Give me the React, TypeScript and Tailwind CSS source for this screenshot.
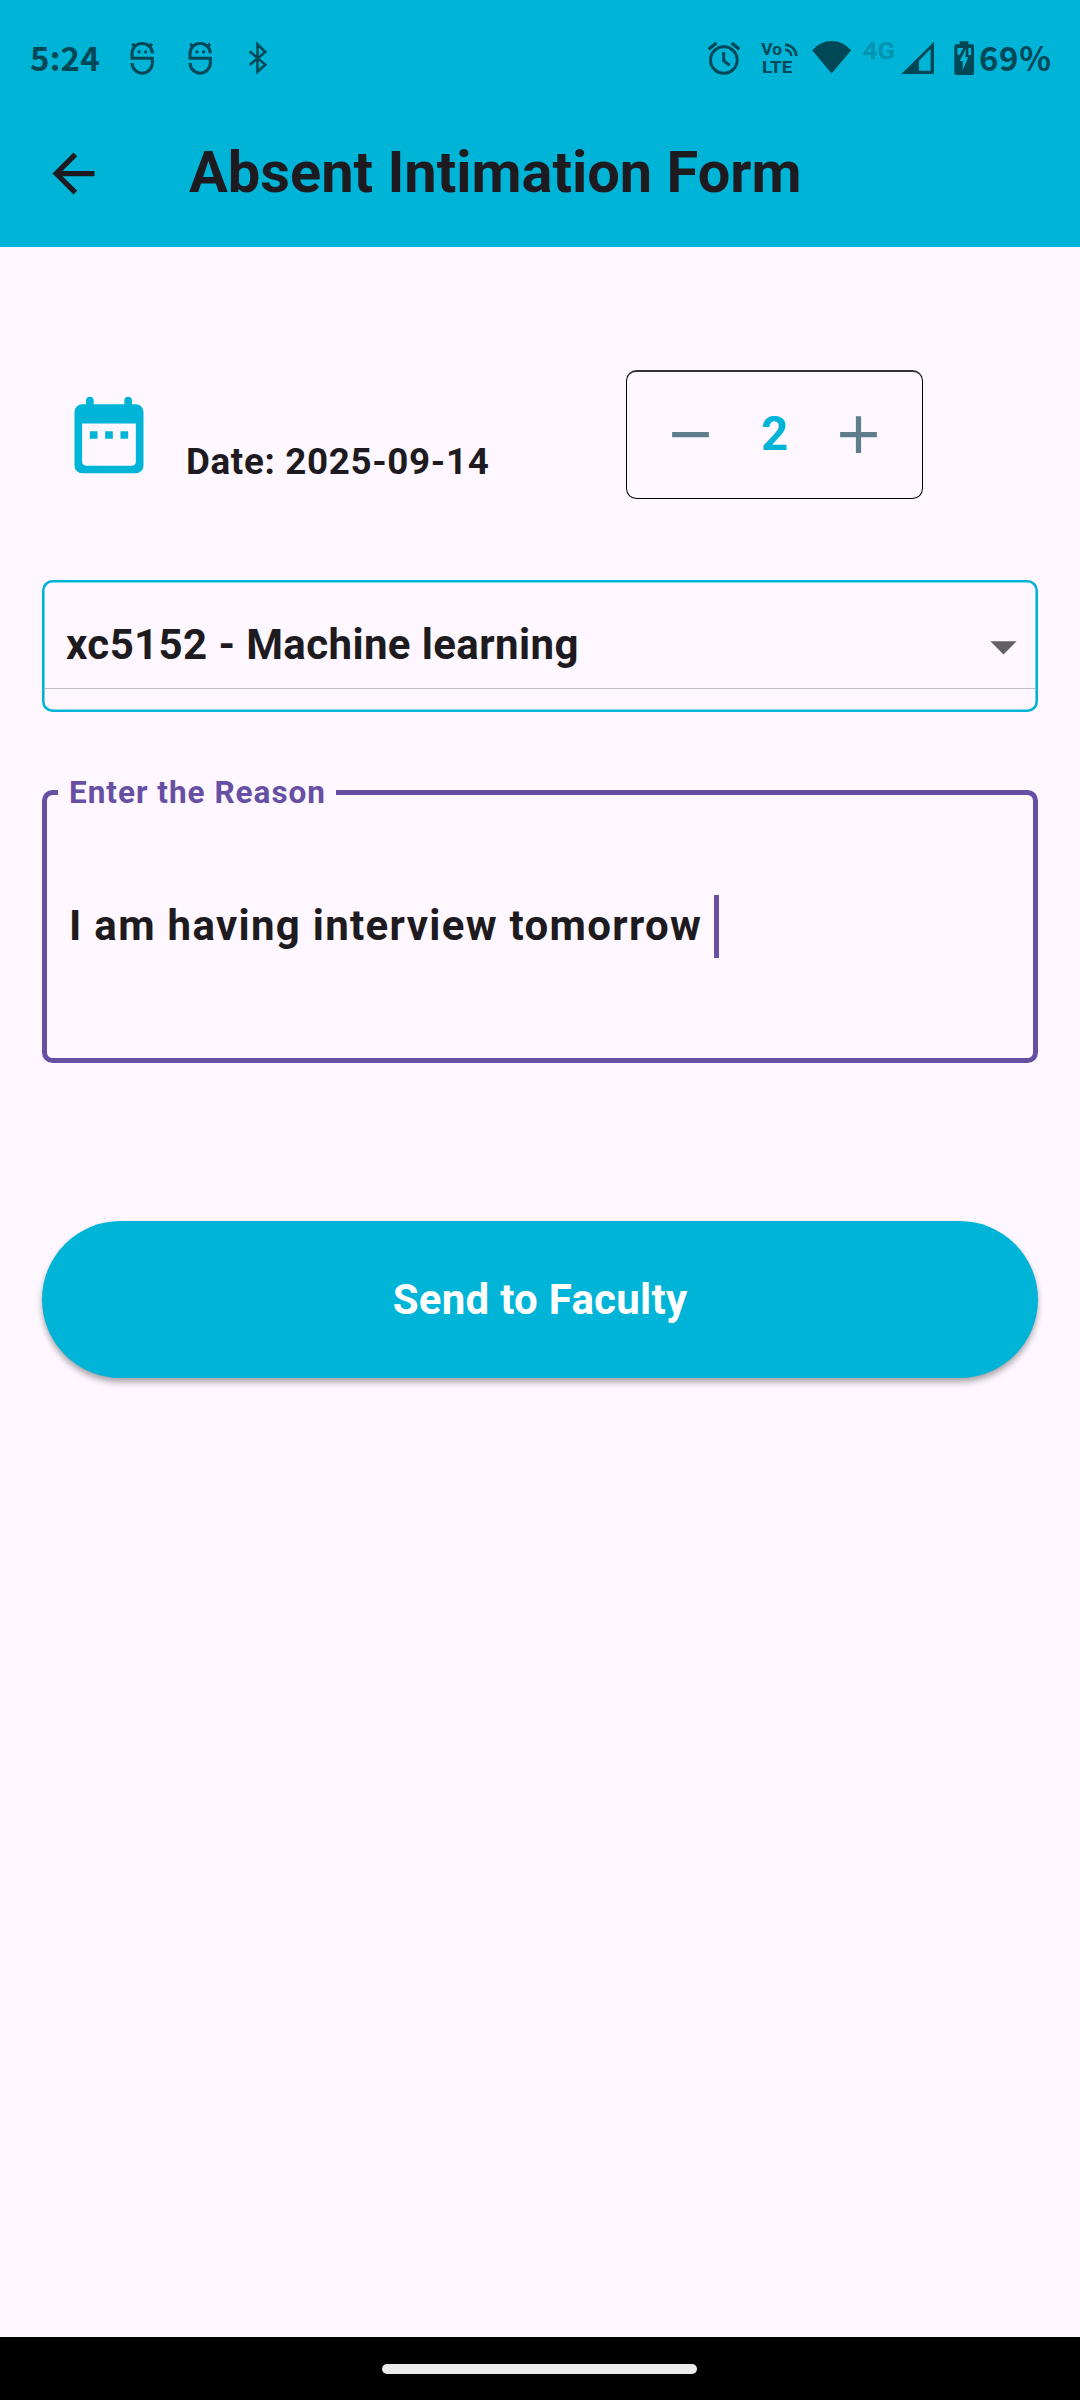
const INK = "#004856";

function MascotIcon({ className }: { className: string }) {
  return (
    <svg viewBox="0 0 80 100" className={className} fill="none" stroke={INK} strokeWidth="9">
      <path d="M70 37A30.500 29.500 0 0 0 9 37V52H70V66A30.500 30.500 0 0 1 9 66" />
      <path d="M10 8L18 17M69 8L61 17" strokeWidth="9" />
      <circle cx="30" cy="32.500" r="5" fill={INK} stroke="none" />
      <circle cx="50" cy="32.500" r="5" fill={INK} stroke="none" />
    </svg>
  );
}

function BluetoothIcon() {
  return (
    <svg viewBox="740 62 66 102" className="ml-[33.500px] h-[34px] w-[22px]" fill="none" stroke={INK} strokeWidth="7.500">
      <path d="M748 93L795 133L771.500 154V72L795 95L748 134" />
    </svg>
  );
}

function AlarmIcon() {
  return (
    <svg viewBox="46 60 108 108" className="h-[36px] w-[36px]" fill="none" stroke={INK} strokeWidth="9">
      <circle cx="99.500" cy="120" r="40" />
      <path d="M99 96V122L117 136" strokeWidth="9" />
      <path d="M54 88L77 69M146 88L123 69" strokeWidth="10" />
    </svg>
  );
}

function VolteIcon() {
  return (
    <svg viewBox="208 60 120 108" className="ml-[18px] h-[36px] w-[40px]" fontFamily="Roboto, sans-serif" fontWeight="700" fill={INK}>
      <text x="212" y="103.500" fontSize="49" textLength="62" lengthAdjust="spacingAndGlyphs">Vo</text>
      <text x="214" y="159" fontSize="52" textLength="91" lengthAdjust="spacingAndGlyphs">LTE</text>
      <path d="M283 74A35 34 0 0 1 317 108M283 89A19 19 0 0 1 302 108" fill="none" stroke={INK} strokeWidth="7.500" />
    </svg>
  );
}

function WifiIcon() {
  return (
    <svg viewBox="362 60 124 108" className="ml-[11px] h-[36px] w-[41.300px]" fill={INK}>
      <path d="M424 160.500L365.500 91A75 75 0 0 1 482.500 91Z" />
    </svg>
  );
}

function NetworkLabel() {
  return (
    <svg viewBox="514 60 104 108" className="ml-[9.400px] h-[36px] w-[34.700px] overflow-visible" fontFamily="Roboto, sans-serif" fontWeight="700" fill="#0094b2">
      <text x="516" y="116.500" fontSize="69" textLength="97" lengthAdjust="spacingAndGlyphs">4G</text>
    </svg>
  );
}

function SignalIcon() {
  return (
    <svg viewBox="630 60 106 108" className="ml-[4px] h-[36px] w-[35.300px]" fill={INK} fillRule="evenodd">
      <path d="M634 162L732 65V162ZM687 152H722V87L687 122Z" />
    </svg>
  );
}

function BatteryIcon() {
  return (
    <svg viewBox="789 60 68 108" className="ml-[17.700px] h-[36px] w-[22.700px]">
      <path d="M809 64H835V73H847Q852 73 852 78V160Q852 165 847 165H798Q793 165 793 160V78Q793 73 798 73H809Z" fill={INK} />
      <path d="M802 84H820L809 104H802ZM835 84H843V105H835Z" fill="#00b4d8" />
      <path d="M828 86L809 123H818V151L835 112H826Z" fill="#00b4d8" />
    </svg>
  );
}

function StatusBar() {
  return (
    <div className="flex h-[100px] items-center pt-[16px] pl-[30px] font-['Noto_Sans_CJK_JP',sans-serif] text-[33px] leading-[48px] font-bold text-[#004856]">
      <span className="w-[98.500px] pb-[2px] tracking-[0.200px]">5:24</span>
      <MascotIcon className="h-[33.300px] w-[26.700px]" />
      <MascotIcon className="ml-[31.500px] h-[33.300px] w-[26.700px]" />
      <BluetoothIcon />
      <div className="ml-auto flex items-center">
        <AlarmIcon />
        <VolteIcon />
        <WifiIcon />
        <NetworkLabel />
        <SignalIcon />
        <BatteryIcon />
        <span className="ml-[3px] w-[101px] pb-[2px] tracking-[0.600px]">69%</span>
      </div>
    </div>
  );
}

function AppBar() {
  return (
    <div className="flex h-[147px] items-center pl-[42px]">
      <button aria-label="Back">
        <svg viewBox="0 0 24 24" className="h-[63px] w-[63px]" fill="#1d1b20">
          <path d="M20 11H7.830l5.590-5.590L12 4l-8 8 8 8 1.410-1.410L7.830 13H20v-2z" />
        </svg>
      </button>
      <h1 className="ml-[84px] pb-[4px] text-[57.750px] leading-[74px] font-bold">Absent Intimation Form</h1>
    </div>
  );
}

function DateRow() {
  return (
    <div className="flex h-[129px] items-start pl-[21px]">
      <svg viewBox="0 0 24 24" className="mt-[19px] h-[92px] w-[92px]" fill="#00b4d8" fillRule="evenodd">
        <path d="M7 2a1 1 0 0 1 1 1v1h8V3a1 1 0 0 1 2 0v1h1a2 2 0 0 1 2 2v14a2 2 0 0 1-2 2H5a2 2 0 0 1-2-2V6a2 2 0 0 1 2-2h1V3a1 1 0 0 1 1-1zM5 9v10a1 1 0 0 0 1 1h12a1 1 0 0 0 1-1V9z" />
        <path d="M7 11h2v2H7zM11 11h2v2h-2zM15 11h2v2h-2z" />
      </svg>
      <p className="mt-[70px] ml-[31px] w-[440px] text-[36.750px] leading-[44px] font-bold tracking-[0.656px]">Date: 2025-09-14</p>
      <div className="flex h-[129px] w-[297px] items-center justify-center gap-[39px] rounded-[10.500px] border border-t-2 border-black border-t-[#333333] pb-px">
        <button aria-label="Decrease">
          <svg viewBox="0 0 24 24" className="h-[63px] w-[63px]" fill="#607d8b">
            <path d="M5 11h14v2H5z" />
          </svg>
        </button>
        <span className="pb-[2px] text-[47.250px] leading-[56px] font-bold text-[#00b4d8]">2</span>
        <button aria-label="Increase">
          <svg viewBox="0 0 24 24" className="h-[63px] w-[63px]" fill="#607d8b">
            <path d="M19 13h-6v6h-2v-6H5v-2h6V5h2v6h6z" />
          </svg>
        </button>
      </div>
    </div>
  );
}

function SubjectSelect() {
  return (
    <div className="mt-[81px] h-[132px] rounded-[10.500px] px-[3px] shadow-[inset_0_0_0_2.600px_#00b4d8]">
      <div className="flex h-[109px] items-center justify-between border-b border-[#bdbdbd] pt-[21px] pl-[21px]">
        <span className="text-[42px] leading-[50px] font-bold tracking-[0.394px]">xc5152 - Machine learning</span>
        <svg viewBox="0 0 24 24" className="mt-[4px] h-[63px] w-[63px]" fill="#616161">
          <path d="M7 10l5 5 5-5z" />
        </svg>
      </div>
    </div>
  );
}

function ReasonField() {
  return (
    <fieldset className="mt-[65px] h-[286px] rounded-[10.500px] border-[5px] border-[#6750a4]">
      <legend className="ml-[11px] h-[31px] pr-[10px] pl-[11px] text-[31.500px] leading-[31px] font-bold tracking-[0.984px] text-[#6750a4]">
        Enter the Reason
      </legend>
      <div className="mt-[87px] flex h-[63px] items-center pl-[22px]">
        <span className="w-[645px] pb-[2px] text-[42px] leading-[62px] font-bold tracking-[1.312px]">I am having interview tomorrow</span>
        <span className="h-[63px] w-[5px] bg-[#6750a4]" />
      </div>
    </fieldset>
  );
}

export default function App() {
  return (
    <div className="flex h-[2400px] w-[1080px] flex-col bg-[#fef7ff] font-['Roboto',sans-serif] text-[#1d1b20]">
      <header className="h-[247px] bg-[#00b4d8]">
        <StatusBar />
        <AppBar />
      </header>
      <main className="flex-1 px-[42px] pt-[123px]">
        <DateRow />
        <SubjectSelect />
        <ReasonField />
        <button className="mt-[158px] flex h-[157px] w-full items-center justify-center rounded-full bg-[#00b4d8] text-[42px] leading-[50px] font-bold tracking-[0.262px] text-white shadow-[0_5px_6px_rgba(0,0,0,0.260),0_2px_4px_rgba(0,0,0,0.100)]">
          Send to Faculty
        </button>
      </main>
      <div className="flex h-[63px] bg-black pt-[27px] pl-[382px]">
        <div className="h-[10px] w-[315px] rounded-full bg-[#ebebeb]" />
      </div>
    </div>
  );
}
